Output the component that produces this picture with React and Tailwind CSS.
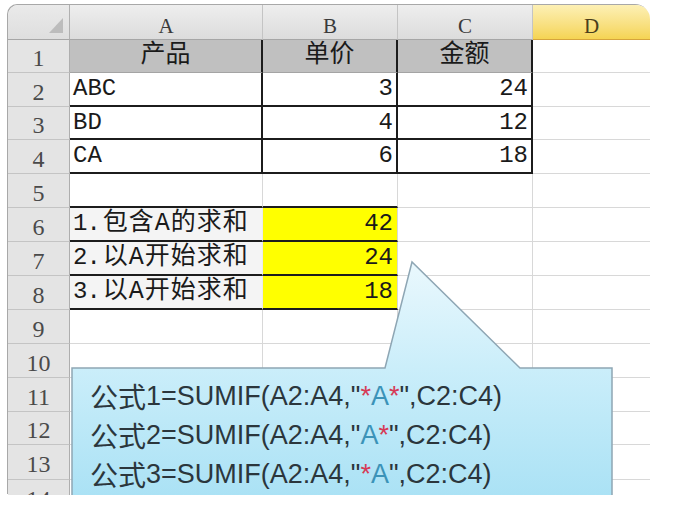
import React from "react";

const mono = "font-['Liberation_Mono','Noto_Sans_CJK_SC',monospace]";

function Cell({ className = "", children }) {
  return (
    <div className={"h-full shrink-0 flex items-center box-border overflow-hidden whitespace-nowrap " + className}>
      {children}
    </div>
  );
}

const RH = "w-[62px] justify-center pt-[4px] bg-[#e4e4e4] border-b border-r border-b-[#c4c4c4] border-r-[#aeaeae] text-[#4a4a4a] text-[24px] font-['Liberation_Serif',serif]";
const gA = "w-[193px] border-b border-r border-[#d8d8d8]";
const gB = "w-[135px] border-b border-r border-[#d8d8d8]";
const gC = "w-[135px] border-b border-r border-[#d8d8d8]";
const gD = "w-[117px] border-b border-[#d8d8d8]";

function Row({ h, n, a, b, c, d }) {
  return (
    <div className={"flex " + h}>
      <Cell className={RH}>{n}</Cell>
      {a}
      {b}
      {c}
      {d || <Cell className={gD} />}
    </div>
  );
}

function Formula({ children }) {
  return (
    <div className="h-[39px] flex items-center whitespace-nowrap">
      <span className="font-['Noto_Sans_CJK_SC',sans-serif] text-[28px] leading-[39px]">公式</span>
      <span className="font-['Liberation_Sans',sans-serif] text-[27px] leading-[39px]">{children}</span>
    </div>
  );
}

function Label({ num, text }) {
  return (
    <span className="flex items-center">
      <span className="tracking-[-1px]">{num}.</span>
      <span className="ml-[3px] text-[25px] tracking-[1px]">{text}</span>
    </span>
  );
}

const R = ({ children }) => <span className="text-[#d63a56]">{children}</span>;
const T = ({ children }) => <span className="text-[#3b93b8]">{children}</span>;

export default function App() {
  const hdr1 = "w-[193px] justify-center bg-[#c0c0c0] border-b border-r-2 border-b-[#a4a4a4] border-r-[#1c1c1c] text-[25px] text-[#1a1a1a]";
  const hdrB = "w-[135px] justify-center bg-[#c0c0c0] border-b border-r-2 border-b-[#a4a4a4] border-r-[#1c1c1c] text-[25px] text-[#1a1a1a]";
  const tA = "w-[193px] pl-[3px] border-b-2 border-r-2 border-[#1c1c1c] text-[24px] text-[#1a1a1a]";
  const tB = "w-[135px] justify-end pr-[3px] border-b-2 border-r-2 border-[#1c1c1c] text-[24px] text-[#1a1a1a]";
  const sA = "w-[193px] pl-[3px] bg-[#f4f4f4] border-b-2 border-r border-b-[#1c1c1c] border-r-[#ececec] text-[24px] text-[#1a1a1a]";
  const sB = "w-[135px] justify-end pr-[4px] bg-[#ffff00] border-b-2 border-r border-b-[#1c1c1c] border-r-[#d8d8d8] text-[24px] text-[#1a1a1a]";
  const r5A = "w-[193px] border-b-2 border-r border-b-[#1c1c1c] border-r-[#d8d8d8]";
  const r5B = "w-[135px] border-b-2 border-r border-b-[#1c1c1c] border-r-[#d8d8d8]";
  const colH = "justify-center pt-[9px] bg-linear-to-b from-[#eeeeee] to-[#dcdcdc] border-b border-r border-b-[#a6a6a6] border-r-[#c4c4c4] text-[21px] text-[#3a3a3a] font-['Liberation_Serif',serif]";

  return (
    <div className={"w-[694px] h-[508px] bg-white pt-[5px] pl-[8px] " + mono}>
      <div className="relative w-[642px] h-[490px] overflow-hidden rounded-tl-[10px] rounded-tr-[14px] shadow-[-1px_-1px_0_#a8a8a8] bg-white">
        {/* column header row */}
        <div className="flex h-[35px]">
          <Cell className="w-[62px] relative bg-linear-to-b from-[#eaeaea] to-[#dedede] border-b border-r border-b-[#a6a6a6] border-r-[#b0b0b0]">
            <svg className="absolute left-0 top-0" width="62" height="35" viewBox="0 0 62 35">
              <polygon points="55,13 55,28 41,28" fill="#bcbcbc" />
            </svg>
          </Cell>
          <Cell className={"w-[193px] " + colH}>A</Cell>
          <Cell className={"w-[135px] " + colH}>B</Cell>
          <Cell className={"w-[135px] " + colH}>C</Cell>
          <Cell className="w-[117px] justify-center pt-[9px] bg-linear-to-b from-[#fdf0b4] to-[#f5d452] border-b border-b-[#d6a43c] text-[21px] text-[#4a3e1c] font-['Liberation_Serif',serif]">D</Cell>
        </div>

        <Row h="h-[33px]" n="1"
          a={<Cell className={hdr1}>产品</Cell>}
          b={<Cell className={hdrB}>单价</Cell>}
          c={<Cell className={hdrB}>金额</Cell>} />
        <Row h="h-[34px]" n="2"
          a={<Cell className={tA}>ABC</Cell>}
          b={<Cell className={tB}>3</Cell>}
          c={<Cell className={tB}>24</Cell>} />
        <Row h="h-[33px]" n="3"
          a={<Cell className={tA}>BD</Cell>}
          b={<Cell className={tB}>4</Cell>}
          c={<Cell className={tB}>12</Cell>} />
        <Row h="h-[34px]" n="4"
          a={<Cell className={tA}>CA</Cell>}
          b={<Cell className={tB}>6</Cell>}
          c={<Cell className={tB}>18</Cell>} />
        <Row h="h-[34px]" n="5"
          a={<Cell className={r5A} />}
          b={<Cell className={r5B} />}
          c={<Cell className={gC} />} />
        <Row h="h-[34px]" n="6"
          a={<Cell className={sA}><Label num="1" text="包含A的求和" /></Cell>}
          b={<Cell className={sB}>42</Cell>}
          c={<Cell className={gC} />} />
        <Row h="h-[34px]" n="7"
          a={<Cell className={sA}><Label num="2" text="以A开始求和" /></Cell>}
          b={<Cell className={sB}>24</Cell>}
          c={<Cell className={gC} />} />
        <Row h="h-[34px]" n="8"
          a={<Cell className={sA}><Label num="3" text="以A开始求和" /></Cell>}
          b={<Cell className={sB}>18</Cell>}
          c={<Cell className={gC} />} />
        {[
          ["9", "h-[34px]"],
          ["10", "h-[34px]"],
          ["11", "h-[34px]"],
          ["12", "h-[33px]"],
          ["13", "h-[35px]"],
          ["14", "h-[34px]"],
        ].map(([n, h]) => (
          <Row key={n} h={h} n={n}
            a={<Cell className={gA} />}
            b={<Cell className={gB} />}
            c={<Cell className={gC} />} />
        ))}

        {/* callout */}
        <svg className="absolute left-0 top-0 pointer-events-none" width="642" height="490" viewBox="0 0 642 490">
          <defs>
            <linearGradient id="cg" x1="0" y1="257" x2="0" y2="490" gradientUnits="userSpaceOnUse">
              <stop offset="0" stopColor="#eaf8fd" />
              <stop offset="0.45" stopColor="#cbeefa" />
              <stop offset="1" stopColor="#abe2f5" />
            </linearGradient>
          </defs>
          <polygon
            points="64,363 377,363 404,257 512,363 604,363 604,500 64,500"
            fill="url(#cg)"
            stroke="#8ea6b4"
            strokeWidth="1.5"
          />
        </svg>
        <div className="absolute left-[82px] top-[372px] text-[#2b363c]">
          <Formula>1=SUMIF(A2:A4,"<R>*</R><T>A</T><R>*</R>",C2:C4)</Formula>
          <Formula>2=SUMIF(A2:A4,"<T>A</T><R>*</R>",C2:C4)</Formula>
          <Formula>3=SUMIF(A2:A4,"<R>*</R><T>A</T>",C2:C4)</Formula>
        </div>
      </div>
    </div>
  );
}
